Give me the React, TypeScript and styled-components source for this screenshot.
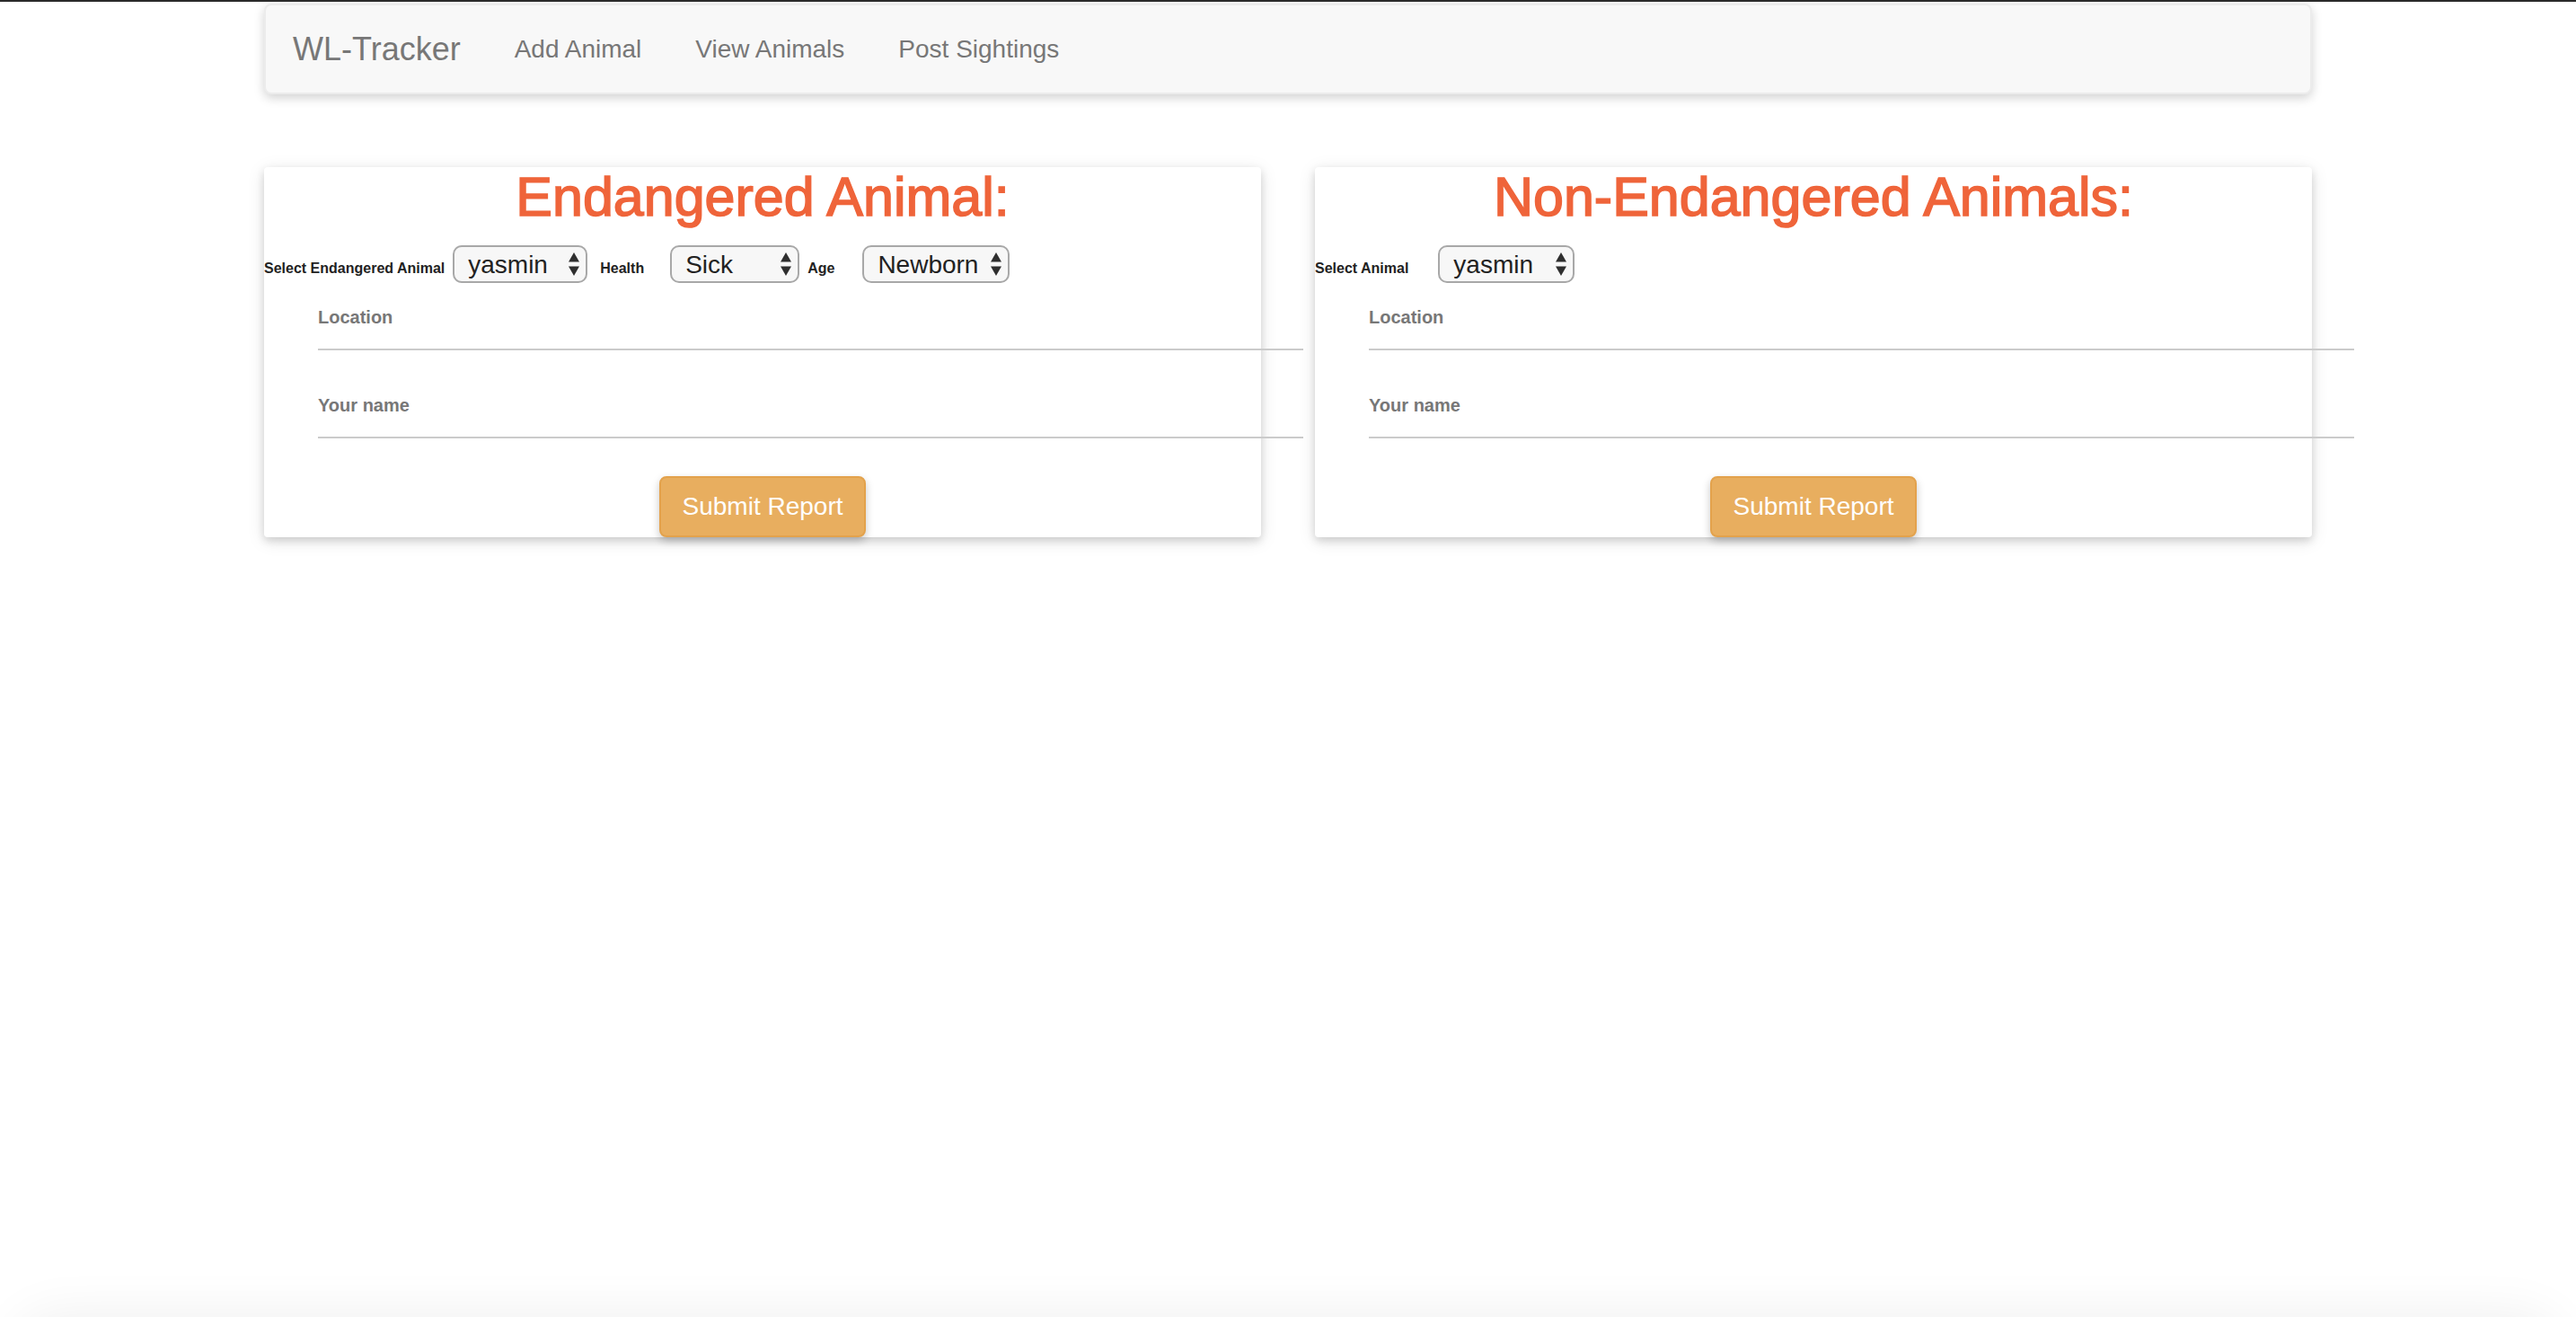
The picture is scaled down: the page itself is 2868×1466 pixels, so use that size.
import React from "react";
import styled, { createGlobalStyle } from "styled-components";

const Global = createGlobalStyle`
  html, body { margin: 0; padding: 0; background: #ffffff; }
  body {
    border-top: 2px solid #2a2a2a;
    font-family: "Liberation Sans", Arial, Helvetica, sans-serif;
    color: #333333;
  }
  * { box-sizing: border-box; }
`;

const Page = styled.div`
  min-height: calc(100vh - 2px);
  display: flex;
  flex-direction: column;
`;

const Main = styled.main`
  flex: 1;
  width: 2280px;
  margin: 0 auto;
`;

const Navbar = styled.nav`
  margin-top: 2px;
  height: 101px;
  display: flex;
  align-items: center;
  background: #f8f8f8;
  border: 2px solid #ececec;
  border-radius: 8px;
  box-shadow: 0 4px 12px rgba(0, 0, 0, 0.18);
`;

const Brand = styled.a`
  padding: 0 30px;
  font-size: 36px;
  line-height: 40px;
  color: #777777;
  text-decoration: none;
`;

const NavLink = styled.a`
  padding: 0 30px;
  font-size: 28px;
  line-height: 40px;
  color: #777777;
  text-decoration: none;
`;

const Panels = styled.div`
  margin-top: 81px;
  display: grid;
  grid-template-columns: 1110px 1110px;
  column-gap: 60px;
  align-items: start;
`;

const Panel = styled.section`
  background: #ffffff;
  border-radius: 4px;
  box-shadow: 0 4px 10px rgba(0, 0, 0, 0.14), 0 4px 20px rgba(0, 0, 0, 0.1);
`;

const Title = styled.h2`
  margin: 0;
  font-size: 61px;
  line-height: 66px;
  font-weight: normal;
  -webkit-text-stroke: 1.6px #ef643a;
  color: #ef643a;
  text-align: center;
`;

const SelectRow = styled.div`
  margin-top: 21px;
  display: flex;
  align-items: baseline;
`;

const RowLabel = styled.label<{ $mr: number }>`
  font-size: 16px;
  font-weight: bold;
  color: #222222;
  white-space: nowrap;
  margin-right: ${(p) => p.$mr}px;
`;

const SelectWrap = styled.span<{ $w: number; $mr: number }>`
  position: relative;
  display: inline-flex;
  width: ${(p) => p.$w}px;
  margin-right: ${(p) => p.$mr}px;
`;

const Select = styled.select`
  appearance: none;
  -webkit-appearance: none;
  width: 100%;
  height: 42px;
  padding: 0 30px 0 15px;
  font-family: "Liberation Sans", Arial, Helvetica, sans-serif;
  font-size: 28px;
  color: #222222;
  background: #f7f7f7;
  border: 2px solid #a8a8a8;
  border-radius: 10px;
  outline: none;
`;

const Arrows = styled.svg`
  position: absolute;
  right: 9px;
  top: 50%;
  transform: translateY(-50%);
  pointer-events: none;
`;

const Field = styled.div<{ $top: number }>`
  margin: ${(p) => p.$top}px 0 0 60px;
  width: calc(100% - 13px);
  border-bottom: 2px solid #cbcbcb;
`;

const FieldLabel = styled.label`
  display: block;
  font-size: 20px;
  line-height: 24px;
  font-weight: bold;
  color: #777777;
`;

const FieldInput = styled.input`
  display: block;
  width: 100%;
  height: 23px;
  padding: 0;
  border: 0;
  outline: none;
  background: transparent;
  font-family: inherit;
  font-size: 20px;
`;

const ButtonRow = styled.div`
  margin-top: 42px;
  display: flex;
  justify-content: center;
`;

const SubmitButton = styled.button`
  height: 68px;
  padding: 0 24px;
  font-family: "Liberation Sans", Arial, Helvetica, sans-serif;
  font-size: 28px;
  color: #ffffff;
  background: #e8ae5f;
  border: 2px solid #e3a24c;
  border-radius: 8px;
  box-shadow: 0 4px 10px rgba(0, 0, 0, 0.22);
  cursor: pointer;
`;

const Footer = styled.footer`
  height: 120px;
  margin: 0 20px;
  border-radius: 40px;
  box-shadow: 0 0 60px rgba(0, 0, 0, 0.07);
`;

function UpDown() {
  return (
    <Arrows width="12" height="26" viewBox="0 0 12 26" aria-hidden>
      <polygon points="0,10.5 6,0 12,10.5" fill="#2e2e2e" />
      <polygon points="0,15.5 12,15.5 6,26" fill="#2e2e2e" />
    </Arrows>
  );
}

function Dropdown({ w, mr, options }: { w: number; mr: number; options: string[] }) {
  return (
    <SelectWrap $w={w} $mr={mr}>
      <Select defaultValue={options[0]}>
        {options.map((o) => (
          <option key={o} value={o}>
            {o}
          </option>
        ))}
      </Select>
      <UpDown />
    </SelectWrap>
  );
}

function FormFields() {
  return (
    <>
      <Field $top={26}>
        <FieldLabel>Location</FieldLabel>
        <FieldInput type="text" />
      </Field>
      <Field $top={49}>
        <FieldLabel>Your name</FieldLabel>
        <FieldInput type="text" />
      </Field>
      <ButtonRow>
        <SubmitButton type="button">Submit Report</SubmitButton>
      </ButtonRow>
    </>
  );
}

export default function App() {
  return (
    <>
      <Global />
      <Page>
        <Main>
          <Navbar>
            <Brand href="#">WL-Tracker</Brand>
            <NavLink href="#">Add Animal</NavLink>
            <NavLink href="#">View Animals</NavLink>
            <NavLink href="#">Post Sightings</NavLink>
          </Navbar>
          <Panels>
            <Panel>
              <Title>Endangered Animal:</Title>
              <SelectRow>
                <RowLabel $mr={9}>Select Endangered Animal</RowLabel>
                <Dropdown w={150} mr={14} options={["yasmin"]} />
                <RowLabel $mr={29}>Health</RowLabel>
                <Dropdown w={144} mr={9} options={["Sick", "Healthy", "Okay"]} />
                <RowLabel $mr={31}>Age</RowLabel>
                <Dropdown w={164} mr={0} options={["Newborn", "Young", "Adult"]} />
              </SelectRow>
              <FormFields />
            </Panel>
            <Panel>
              <Title>Non-Endangered Animals:</Title>
              <SelectRow>
                <RowLabel $mr={33}>Select Animal</RowLabel>
                <Dropdown w={152} mr={0} options={["yasmin"]} />
              </SelectRow>
              <FormFields />
            </Panel>
          </Panels>
        </Main>
      </Page>
      <Footer />
    </>
  );
}
